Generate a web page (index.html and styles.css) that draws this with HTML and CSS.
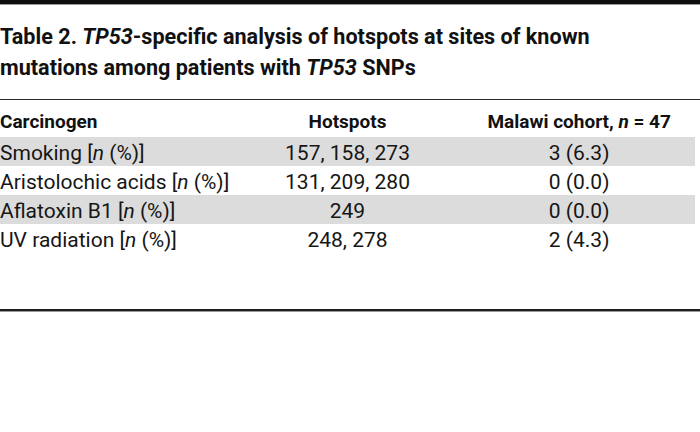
FILE: index.html
```html
<!DOCTYPE html>
<html>
<head>
<meta charset="utf-8">
<link rel="stylesheet" href="styles.css">
</head>
<body>
<div class="topbar"></div>
<h1 class="title">Table 2. <i>TP53</i>-specific analysis of hotspots at sites of known mutations among patients with <i>TP53</i> SNPs</h1>
<div class="rule"></div>
<table class="data">
  <thead>
    <tr><th class="c1">Carcinogen</th><th>Hotspots</th><th>Malawi cohort, <i>n</i> = 47</th></tr>
  </thead>
  <tbody>
    <tr class="shade"><td class="c1">Smoking [<i>n</i> (%)]</td><td>157, 158, 273</td><td>3 (6.3)</td></tr>
    <tr><td class="c1">Aristolochic acids [<i>n</i> (%)]</td><td>131, 209, 280</td><td>0 (0.0)</td></tr>
    <tr class="shade"><td class="c1">Aflatoxin B1 [<i>n</i> (%)]</td><td>249</td><td>0 (0.0)</td></tr>
    <tr><td class="c1">UV radiation [<i>n</i> (%)]</td><td>248, 278</td><td>2 (4.3)</td></tr>
  </tbody>
</table>
<div class="rule bottom"></div>
</body>
</html>
```
FILE: styles.css
```css
html, body {
  margin: 0;
  padding: 0;
  background: #fff;
}
body {
  width: 700px;
  height: 432px;
  font-family: Roboto, "Noto Sans", sans-serif;
  color: #161616;
}
.topbar {
  height: 4px;
  background: #0e0e0e;
  border-bottom: 1px solid #9a9a9a;
}
.title {
  margin: 0;
  padding: 16px 0 0 0;
  max-width: 640px;
  font-size: 21.6px;
  line-height: 31px;
  font-weight: 700;
  color: #111;
}
.rule {
  margin-top: 16px;
  height: 1px;
  background: #2a2a2a;
}
.data {
  width: 695px;
  border-collapse: collapse;
  table-layout: fixed;
  font-size: 21px;
}
.data th, .data td {
  width: 33.33%;
  text-align: center;
  font-weight: 400;
}
.data th {
  font-weight: 700;
  font-size: 19px;
  line-height: 26px;
  padding: 9px 0 2px 0;
  color: #111;
}
.data td {
  line-height: 25px;
  padding: 4px 0 0 0;
}
.data .c1 {
  text-align: left;
}
.shade {
  background: #dcdcdc;
}
.bottom {
  margin-top: 56px;
  height: 2px;
  background: #1e1e1e;
  border-bottom: 1px solid #9a9a9a;
}
```
